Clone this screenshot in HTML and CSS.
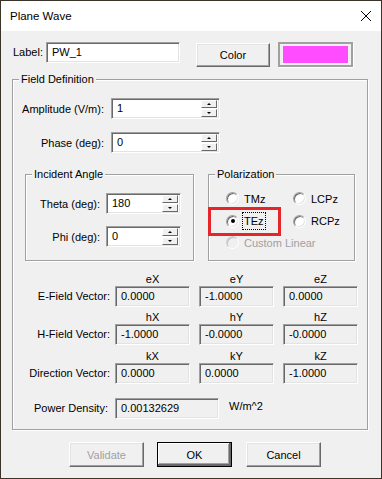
FILE: index.html
```html
<!DOCTYPE html>
<html lang="en">
<head>
  <meta charset="UTF-8" />
  <title>Plane Wave</title>
  <link rel="stylesheet" href="styles.css">
</head>
<body>
  <div class="window">
    <div class="titlebar">
      <span class="title">Plane Wave</span>
      <svg class="close" width="10" height="10" viewBox="0 0 10 10">
        <path d="M0 0 L10 10 M10 0 L0 10" stroke="#000" stroke-width="1" fill="none" />
      </svg>
    </div>

    <div class="client">
      <div class="label-row">
        <span class="lbl">Label:</span>
        <div class="edit label-edit">PW_1</div>
        <div class="btn color-btn">Color</div>
        <div class="swatch"><div class="swatch-fill"></div></div>
      </div>

      <div class="group field-def">
        <span class="group-title">Field Definition</span>

        <div class="form-row">
          <span class="row-label">Amplitude (V/m):</span>
          <div class="edit spin-edit wide">
            <span class="value">1</span>
            <div class="spinner"><span class="spin"><i class="up"></i></span><span class="spin"><i class="down"></i></span></div>
          </div>
        </div>
        <div class="form-row phase-row">
          <span class="row-label">Phase (deg):</span>
          <div class="edit spin-edit wide">
            <span class="value">0</span>
            <div class="spinner"><span class="spin"><i class="up"></i></span><span class="spin"><i class="down"></i></span></div>
          </div>
        </div>

        <div class="sub-groups">
          <div class="group incident">
            <span class="group-title">Incident Angle</span>
            <div class="form-row">
              <span class="row-label short">Theta (deg):</span>
              <div class="edit spin-edit narrow">
                <span class="value">180</span>
                <div class="spinner"><span class="spin"><i class="up"></i></span><span class="spin"><i class="down"></i></span></div>
              </div>
            </div>
            <div class="form-row phi-row">
              <span class="row-label short">Phi (deg):</span>
              <div class="edit spin-edit narrow">
                <span class="value">0</span>
                <div class="spinner"><span class="spin"><i class="up"></i></span><span class="spin"><i class="down"></i></span></div>
              </div>
            </div>
          </div>

          <div class="group polarization">
            <span class="group-title">Polarization</span>
            <div class="radios">
              <div class="radio"><span class="dot"></span><span class="rtext">TMz</span></div>
              <div class="radio"><span class="dot"></span><span class="rtext">LCPz</span></div>
              <div class="radio"><span class="dot checked"></span><span class="rtext focus">TEz</span></div>
              <div class="radio"><span class="dot"></span><span class="rtext">RCPz</span></div>
              <div class="radio disabled span2"><span class="dot"></span><span class="rtext">Custom Linear</span></div>
            </div>
            <div class="highlight"></div>
          </div>
        </div>

        <div class="vectors">
          <div class="vec-head"><span class="spacer"></span><span class="col">eX</span><span class="col">eY</span><span class="col">eZ</span></div>
          <div class="vec-row">
            <span class="vec-label">E-Field Vector:</span>
            <div class="edit ro">0.0000</div><div class="edit ro">-1.0000</div><div class="edit ro">0.0000</div>
          </div>
          <div class="vec-head"><span class="spacer"></span><span class="col">hX</span><span class="col">hY</span><span class="col">hZ</span></div>
          <div class="vec-row">
            <span class="vec-label">H-Field Vector:</span>
            <div class="edit ro">-1.0000</div><div class="edit ro">-0.0000</div><div class="edit ro">-0.0000</div>
          </div>
          <div class="vec-head last"><span class="spacer"></span><span class="col">kX</span><span class="col">kY</span><span class="col">kZ</span></div>
          <div class="vec-row">
            <span class="vec-label">Direction Vector:</span>
            <div class="edit ro">0.0000</div><div class="edit ro">0.0000</div><div class="edit ro">-1.0000</div>
          </div>
        </div>

        <div class="power-row">
          <span class="power-label">Power Density:</span>
          <div class="edit ro power">0.00132629</div>
          <span class="unit">W/m^2</span>
        </div>
      </div>

      <div class="buttons">
        <div class="btn disabled">Validate</div>
        <div class="btn default">OK</div>
        <div class="btn">Cancel</div>
      </div>
    </div>
  </div>
</body>
</html>
```

FILE: styles.css
```css
* {
  box-sizing: border-box;
}
body {
  margin: 0;
  font-family: "Liberation Sans", Arial, sans-serif;
  font-size: 11px;
  color: #000;
  background-color: #f0f0f0;
}
.window {
  width: 382px;
  height: 479px;
  border: 1px solid #3a3428;
  background-color: #f0f0f0;
  overflow: hidden;
}
.titlebar {
  height: 30px;
  background-color: #fff;
  display: flex;
  align-items: center;
  padding-left: 9px;
}
.title {
  font-size: 11.5px;
  flex-grow: 1;
}
.close {
  margin-right: 10px;
}

/* 3D controls */
.edit {
  height: 21px;
  background-color: #fff;
  border: 1px solid;
  border-color: #a0a0a0 #fff #fff #a0a0a0;
  box-shadow: inset 1px 1px #696969, inset -1px -1px #e3e3e3;
  padding: 0 4px 0 5px;
  display: flex;
  align-items: center;
  line-height: 13px;
}
.edit.ro {
  background-color: #f0f0f0;
  width: 75px;
}
.btn {
  width: 75px;
  height: 25px;
  border: 1px solid;
  border-color: #fff #696969 #696969 #fff;
  box-shadow: inset -1px -1px #a0a0a0, inset 1px 1px #e3e3e3;
  display: flex;
  align-items: center;
  justify-content: center;
}
.btn.default {
  outline: 1px solid #000;
  outline-offset: -1px;
  border-color: #000 #000 #000 #000;
  box-shadow: inset -2px -2px #696969, inset 1px 1px #fff, inset -3px -3px #a0a0a0;
}
.btn.disabled {
  color: #a0a0a0;
}
.group {
  position: relative;
  border: 1px solid #a0a0a0;
  box-shadow: inset 1px 1px #fff, 1px 1px #fff;
}
.group-title {
  position: absolute;
  top: -8px;
  left: 6px;
  padding: 0 2px;
  background-color: #f0f0f0;
  line-height: 14px;
}

/* label row */
.client {
  padding-left: 11px;
}
.label-row {
  display: flex;
  align-items: flex-start;
  margin-top: 11px;
  padding-left: 1px;
}
.lbl {
  width: 33px;
  line-height: 21px;
}
.label-edit {
  width: 134px;
}
.color-btn {
  width: 74px;
  height: 24px;
  margin-left: 16px;
  margin-top: 1px;
}
.swatch {
  width: 75px;
  height: 25px;
  margin-left: 8px;
  border: 2px solid #a0a0a0;
  box-shadow: 1px 1px #fff;
  padding: 2px 3px;
}
.swatch-fill {
  height: 17px;
  background-color: #ff4cff;
}

/* field definition */
.field-def {
  width: 356px;
  margin-top: 12px;
  padding: 18px 0 10px 0;
}
.form-row {
  display: flex;
  align-items: center;
}
.row-label {
  width: 91px;
  text-align: right;
  margin-right: 7px;
}
.row-label.short {
  width: 74px;
  margin-right: 6px;
}
.phase-row {
  margin-top: 13px;
}
.spin-edit {
  padding-right: 2px;
}
.spin-edit .value {
  flex-grow: 1;
}
.spin-edit.wide {
  width: 109px;
}
.spin-edit.narrow {
  width: 75px;
}
.spinner {
  display: flex;
  flex-direction: column;
  gap: 1px;
  width: 16px;
}
.spin {
  height: 8px;
  border: 1px solid;
  border-color: #fff #696969 #696969 #fff;
  background-color: #f0f0f0;
  display: flex;
  align-items: center;
  justify-content: center;
}
.spin i {
  width: 0;
  height: 0;
  border-left: 2px solid transparent;
  border-right: 2px solid transparent;
}
.spin i.up {
  border-bottom: 2px solid #000;
}
.spin i.down {
  border-top: 2px solid #000;
}

/* sub groups */
.sub-groups {
  display: flex;
  margin-top: 21px;
  margin-left: 12px;
}
.incident {
  width: 169px;
  height: 87px;
  padding-top: 18px;
}
.phi-row {
  margin-top: 12px;
}
.polarization {
  width: 147px;
  height: 87px;
  margin-left: 14px;
  padding: 12px 0 0 17px;
}
.radios {
  display: grid;
  grid-template-columns: 67px 60px;
  grid-template-rows: 23px 22px 21px;
}
.radio {
  display: flex;
  align-items: center;
}
.radio.span2 {
  grid-column: span 2;
}
.dot {
  width: 13px;
  height: 13px;
  border-radius: 50%;
  border: 1px solid;
  border-color: #a0a0a0 #fff #fff #a0a0a0;
  box-shadow: inset 1px 1px #696969, inset -1px -1px #e3e3e3;
  background-color: #fff;
  display: flex;
  align-items: center;
  justify-content: center;
}
.dot.checked::after {
  content: "";
  width: 4px;
  height: 4px;
  border-radius: 50%;
  background-color: #000;
}
.rtext {
  margin-left: 3px;
  padding: 1px 1px;
  line-height: 14px;
  border: 1px solid transparent;
}
.rtext.focus {
  border: 1px dotted #000;
}
.radio.disabled {
  color: #a0a0a0;
}
.radio.disabled .dot {
  background-color: #f0f0f0;
  border-color: #d0d0d0 #fff #fff #d0d0d0;
  box-shadow: inset 1px 1px #c0c0c0;
}
.highlight {
  position: absolute;
  left: -1px;
  top: 32px;
  width: 73px;
  height: 29px;
  border: 3px solid #e4262b;
}

/* vectors */
.vectors {
  margin-top: 11px;
}
.vec-head {
  display: flex;
  height: 14px;
  line-height: 14px;
  margin-top: 3px;
}
.vec-head:first-child {
  margin-top: 0;
}
.vec-head.last {
  margin-top: 4px;
}
.spacer {
  width: 93px;
}
.col {
  width: 75px;
  margin-left: 9px;
  text-align: center;
}
.vec-row {
  display: flex;
}
.vec-label {
  width: 97px;
  text-align: right;
  line-height: 21px;
  margin-right: 5px;
}
.vec-row .edit + .edit {
  margin-left: 9px;
}
.power-row {
  display: flex;
  margin-top: 14px;
}
.power-label {
  width: 95px;
  text-align: right;
  line-height: 21px;
  margin-right: 7px;
}
.edit.power {
  width: 104px;
}
.unit {
  margin-left: 10px;
  line-height: 17px;
}

/* bottom buttons */
.buttons {
  display: flex;
  margin-top: 12px;
  padding-left: 57px;
  gap: 14px;
}
.buttons .btn:first-child {
  margin-right: -1px;
}
```
